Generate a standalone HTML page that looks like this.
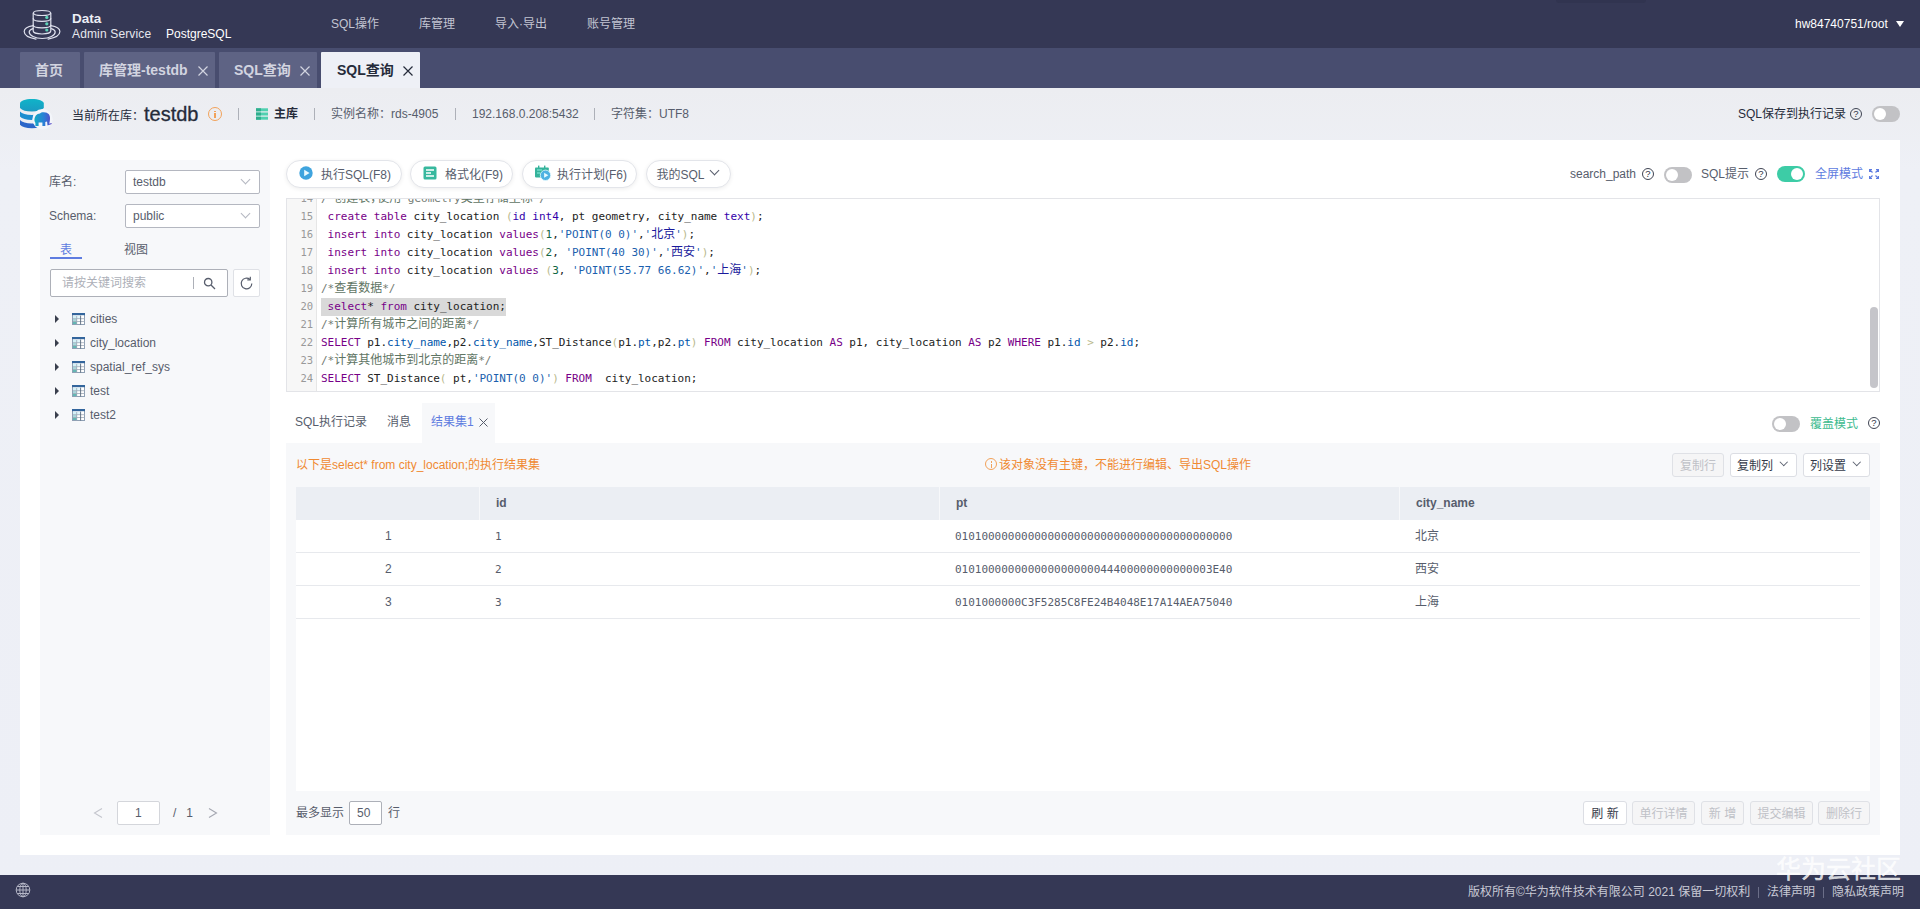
<!DOCTYPE html>
<html lang="zh-CN">
<head>
<meta charset="utf-8">
<title>Data Admin Service</title>
<style>
*{box-sizing:border-box;margin:0;padding:0}
html,body{width:1920px;height:909px;overflow:hidden}
body{font-family:"Liberation Sans","Noto Sans CJK SC",sans-serif;font-size:12px;color:#252b3a;background:linear-gradient(180deg,#ecedf1 90px,#eef0f6 170px,#edeff6 100%);position:relative}
.abs{position:absolute}
.t{position:absolute;white-space:nowrap;line-height:1}
/* top nav */
#nav{position:absolute;left:0;top:0;width:1920px;height:48px;background:#353855}
#nav .m{color:#c3c5d2;font-size:12px;top:18px}
/* tab bar */
#tabs{position:absolute;left:0;top:48px;width:1920px;height:40px;background:#484d6f}
.tab{position:absolute;top:4px;height:36px;border-radius:1px 1px 0 0;background:#5e6384;color:#d2d4e0;font-weight:bold;font-size:14px}
.tab.act{background:#eef0f6;color:#252b3a}
.tab .t{top:11px}
/* info bar */
#info{position:absolute;left:0;top:88px;width:1920px;height:52px}
#info .t{font-size:12px;color:#575d6c}
.vsep{position:absolute;width:1px;height:12px;background:#adb0b8;top:20px}
/* card */
#card{position:absolute;left:20px;top:140px;width:1880px;height:715px;background:#fff}
#left{position:absolute;left:40px;top:160px;width:230px;height:675px;background:#f7f8fa}
.sel{position:absolute;width:135px;height:24px;border:1px solid #b4b7c0;background:#fff;border-radius:2px}
.sel .t{left:7px;top:5px;color:#575d6c}

/* left panel */
.lbl{position:absolute;left:49px;color:#575d6c;font-size:12px;line-height:1;white-space:nowrap}
.chev{position:absolute;width:7px;height:7px;border-right:1px solid #b4b7c1;border-bottom:1px solid #b4b7c1;transform:rotate(45deg)}
.tree{position:absolute;left:50px;width:200px;height:24px}
.tree .ar{position:absolute;left:5px;top:8px;width:0;height:0;border-left:4.500px solid #3a3f4d;border-top:4px solid transparent;border-bottom:4px solid transparent}
.tree svg{position:absolute;left:22px;top:6px}
.tree .t{left:40px;top:6px;color:#575d6c;font-size:12px}
/* pills */
.pill{position:absolute;top:160px;height:28px;border:1px solid #e3e5ea;border-radius:14px;background:#fff;box-shadow:0 1px 4px rgba(0,0,0,.07)}
.pill .t{top:8px;color:#575d6c;font-size:12px}
/* toggles */
.tg{position:absolute;width:28px;height:16px;border-radius:8px;background:#c2c2c5}
.tg i{position:absolute;left:2px;top:2px;width:12px;height:12px;border-radius:6px;background:#fff}
.tg.on{background:#3dcca6}
.tg.on i{left:14px}
.q{position:absolute;width:12px;height:12px;border:1px solid #3f4453;border-radius:50%;font-size:9.500px;line-height:10px;text-align:center;color:#2f3443;font-weight:normal}
/* editor */
#ed{position:absolute;left:286px;top:198px;width:1594px;height:194px;border:1px solid #e3e4e8;background:#fff;overflow:hidden}
#gut{position:absolute;left:0;top:0;width:30px;height:100%;background:#f7f7f7;border-right:1px solid #e6e6e6}
.ln{position:absolute;left:0;width:1590px;height:18px;font-family:"DejaVu Sans Mono","Liberation Mono","Noto Sans CJK SC",monospace;font-size:11px;letter-spacing:-0.020px;line-height:18px;white-space:pre;color:#222}
.ln .g{position:absolute;left:0;top:0;width:26px;text-align:right;font-weight:normal;color:#999;font-size:10.500px;line-height:17px}
.ln .c{position:absolute;left:34px;text-decoration:none}
.k{color:#770088}.bi{color:#3300aa}.br{color:#b9b98c}.n{color:#116644}.st{color:#1b5fae}.cm{color:#727a72}.v2{color:#0055aa}
.cj{font-size:12px;color:#1a1a9c;letter-spacing:0;line-height:0}
.cm .cj{color:#5f7564}
/* results */
#res{position:absolute;left:286px;top:443px;width:1594px;height:392px;background:#f7f8fa}
.btn{position:absolute;height:24px;border:1px solid #dcdee4;border-radius:3px;background:#fff;color:#353a49;font-size:12px;line-height:24px;text-align:center;white-space:nowrap}
.btn.dis{background:#f5f5f6;color:#bfc1c7;border-color:#dfe1e6}
.th{position:absolute;top:487px;height:33px;background:#ebeef3}
.th .t{top:10px;left:16px;font-weight:bold;color:#575d6c;font-size:12px}
.row{position:absolute;left:296px;width:1564px;height:33px;border-bottom:1px solid #e7e9ed}
.row .t{top:10px;font-size:12px;color:#575d6c}
.row .mono{font-family:"DejaVu Sans Mono","Liberation Mono",monospace;font-size:11px;letter-spacing:-0.020px}
#footer .t{color:#c9cad6;font-size:12px;top:11px}
#footer{position:absolute;left:0;top:875px;width:1920px;height:34px;background:#353855}
</style>
</head>
<body>
<div id="nav">
  <svg class="abs" style="left:16px;top:4px" width="54" height="40" viewBox="16 4 54 40" fill="none" stroke="#dfe1ee" stroke-width="1.200" stroke-linecap="round">
    <ellipse cx="42" cy="13" rx="8.600" ry="2.500"/>
    <path d="M33.200 13V31c0 1.700 3.900 3 8.800 3s8.800-1.300 8.800-3V13"/>
    <path d="M33.200 18.600c0 1.600 3.900 2.800 8.800 2.800s8.800-1.200 8.800-2.800M33.200 25c0 1.600 3.900 2.800 8.800 2.800s8.800-1.200 8.800-2.800"/>
    <path d="M33.200 25.600C27 26.600 24.200 28.600 24.200 31.600c0 3.400 4.800 6.300 11.800 7.600M50.800 25.600C57 26.600 59.900 28.600 59.900 31.600c0 3.400-4.800 6.300-11.800 7.600"/>
    <path d="M33 28.600c-2.500.800-3.800 2-3.800 3.400 0 3.300 5.800 6.500 13 6.500s13-3.200 13-6.500c0-1.400-1.300-2.600-3.800-3.400"/>
    <circle cx="46.800" cy="17.400" r="1.600" fill="#5fd3b9" stroke="none"/><circle cx="46.800" cy="23.800" r="1.600" fill="#5fd3b9" stroke="none"/><circle cx="46.800" cy="30" r="1.600" fill="#5fd3b9" stroke="none"/>
  </svg>
  <div class="t" style="left:72px;top:12px;color:#eceef4;font-weight:bold;font-size:13.500px">Data</div>
  <div class="t" style="left:72px;top:28px;color:#e6e7ee;font-size:12px;letter-spacing:0.150px">Admin Service</div>
  <div class="t" style="left:166px;top:28px;color:#fff;font-size:12px">PostgreSQL</div>
  <div class="t m" style="left:331px">SQL操作</div>
  <div class="t m" style="left:419px">库管理</div>
  <div class="t m" style="left:495px">导入·导出</div>
  <div class="t m" style="left:587px">账号管理</div>
  <div class="t" style="left:1795px;top:18px;color:#fff;font-size:12px">hw84740751/root</div>
  <div class="abs" style="left:1896px;top:21px;width:0;height:0;border-top:6px solid #fff;border-left:4px solid transparent;border-right:4px solid transparent"></div>
  <div class="abs" style="left:1556px;top:0;width:90px;height:3px;background:#313450;border-radius:0 0 3px 3px"></div>
</div>
<div id="tabs">
  <div class="tab" style="left:20px;width:60px"><div class="t" style="left:15px">首页</div></div>
  <div class="tab" style="left:84px;width:131px"><div class="t" style="left:15px">库管理-testdb</div><svg class="abs" style="left:114px;top:14px" width="10" height="10" viewBox="0 0 10 10" stroke="#d2d4e0" stroke-width="1.2" fill="none"><path d="M0.500 0.500l9 9M9.500 0.500l-9 9"/></svg></div>
  <div class="tab" style="left:219px;width:98px"><div class="t" style="left:15px">SQL查询</div><svg class="abs" style="left:81px;top:14px" width="10" height="10" viewBox="0 0 10 10" stroke="#d2d4e0" stroke-width="1.2" fill="none"><path d="M0.500 0.500l9 9M9.500 0.500l-9 9"/></svg></div>
  <div class="tab act" style="left:321px;width:99px"><div class="t" style="left:16px">SQL查询</div><svg class="abs" style="left:82px;top:14px" width="10" height="10" viewBox="0 0 10 10" stroke="#252b3a" stroke-width="1.2" fill="none"><path d="M0.500 0.500l9 9M9.500 0.500l-9 9"/></svg></div>
</div>
<div id="info">
  <svg class="abs" style="left:14px;top:4px" width="48" height="44" viewBox="14 92 48 44">
    <defs>
      <linearGradient id="g1" x1="0" y1="0" x2="1" y2="0"><stop offset="0" stop-color="#12a9c2"/><stop offset="0.550" stop-color="#2a7fd6"/><stop offset="1" stop-color="#5a45c6"/></linearGradient>
      <linearGradient id="g2" x1="0" y1="0" x2="0" y2="1"><stop offset="0" stop-color="#10b4c8"/><stop offset="1" stop-color="#1b9ac2"/></linearGradient>
    </defs>
    <path d="M20 103.500C20 100.900 25.300 99 31.900 99S43.800 100.900 43.800 103.500V108C41.800 110.400 37.800 111.600 31.900 111.600S22 110.400 20 108Z" fill="url(#g2)"/>
    <path d="M20 111.400C22 113.700 26 114.900 31.900 114.900S41.800 113.700 43.800 111.400V116.600C41.800 118.900 37.800 120.100 31.900 120.100S22 118.900 20 116.600Z" fill="#1d8ed0"/>
    <path d="M20 120C22 122.300 26 123.500 31.900 123.500S41.800 122.300 43.800 120V124.800C41.800 127.100 37.800 128.300 31.900 128.300S22 127.100 20 124.800Z" fill="#2b66c9"/>
    <circle cx="42.500" cy="119.300" r="10.200" fill="#f3f5fa"/>
    <path d="M34.500 121C34 116.500 36.800 113.800 40 113.600C41 112.200 43.500 111.900 45 112.600C48 112.600 50 115 50 118C50 120.500 49.600 122.300 49.200 123.800L51.500 123.100L51.700 123.900L47.600 125.600C47.200 124.200 47.300 122.600 47 121.600L45.300 122V125.900H42.400V122.600H38.600V125.900H35.400V123Z" fill="url(#g1)"/>
  </svg>
  <div class="t" style="left:72px;top:22px;color:#252b3a">当前所在库：</div>
  <div class="t" style="left:144px;top:16px;font-size:20px;color:#252b3a;-webkit-text-stroke:0.300px #252b3a">testdb</div>
  <div class="abs" style="left:208px;top:19px;width:14px;height:14px;border:1.500px solid #f2a25a;border-radius:50%"></div>
  <div class="abs" style="left:214.300px;top:25px;width:1.500px;height:5px;background:#f2a25a"></div>
  <div class="abs" style="left:214.300px;top:22.500px;width:1.500px;height:1.500px;background:#f2a25a"></div>
  <div class="vsep" style="left:238px"></div>
  <svg class="abs" style="left:256px;top:20px" width="12" height="12" viewBox="0 0 12 12"><rect x="0" y="0.300" width="12" height="3" fill="#4fd0b0"/><rect x="0" y="4.500" width="12" height="3" fill="#4fd0b0"/><rect x="0" y="8.700" width="12" height="3" fill="#4fd0b0"/><rect x="0" y="0.300" width="5" height="3" fill="#2fae8e"/><rect x="0" y="4.500" width="5" height="3" fill="#2fae8e"/><rect x="0" y="8.700" width="5" height="3" fill="#2fae8e"/></svg>
  <div class="t" style="left:274px;top:20px;color:#252b3a;font-weight:bold">主库</div>
  <div class="vsep" style="left:314px"></div>
  <div class="t" style="left:331px;top:20px">实例名称：rds-4905</div>
  <div class="vsep" style="left:455px"></div>
  <div class="t" style="left:472px;top:20px">192.168.0.208:5432</div>
  <div class="vsep" style="left:594px"></div>
  <div class="t" style="left:611px;top:20px">字符集：UTF8</div>
  <div class="t" style="left:1738px;top:20px;color:#252b3a">SQL保存到执行记录</div>
  <div class="q" style="left:1850px;top:20px">?</div>
  <div class="tg" style="left:1872px;top:18px"><i></i></div>
</div>
<div id="card"></div>
<div id="left"></div>
<div id="leftc">
  <div class="lbl" style="top:176px">库名:</div>
  <div class="sel" style="left:125px;top:170px"><div class="t">testdb</div><div class="chev" style="left:116px;top:5px"></div></div>
  <div class="lbl" style="top:210px">Schema:</div>
  <div class="sel" style="left:125px;top:204px"><div class="t">public</div><div class="chev" style="left:116px;top:5px"></div></div>
  <div class="t" style="left:60px;top:243.500px;color:#5e7ce0;font-size:12px">表</div>
  <div class="abs" style="left:50px;top:257px;width:32px;height:2px;background:#5e7ce0"></div>
  <div class="t" style="left:124px;top:243.500px;color:#575d6c;font-size:12px">视图</div>
  <div class="abs" style="left:50px;top:269px;width:178px;height:28px;border:1px solid #adb0b8;border-radius:2px;background:#fff"></div>
  <div class="t" style="left:62px;top:277px;color:#adb0b8;font-size:12px">请按关键词搜索</div>
  <div class="abs" style="left:193px;top:277px;width:1px;height:12px;background:#adb0b8"></div>
  <svg class="abs" style="left:203px;top:277px" width="13" height="13" viewBox="0 0 13 13" fill="none" stroke="#575d6c" stroke-width="1.300"><circle cx="5.200" cy="5.200" r="3.700"/><path d="M8 8l4 4"/></svg>
  <div class="abs" style="left:233px;top:269px;width:27px;height:28px;border:1px solid #dfe1e6;border-radius:2px;background:#fff"></div>
  <svg class="abs" style="left:239px;top:276px" width="15" height="15" viewBox="0 0 15 15" fill="none" stroke="#575d6c" stroke-width="1.200"><path d="M12.800 7.500a5.300 5.300 0 1 1-1.800-4"/><path d="M11.300 0.800v3h-3" stroke-linejoin="miter"/></svg>
  <div class="tree" style="top:307px"><div class="ar"></div><svg width="13" height="12" viewBox="0 0 13 12"><rect x="0.500" y="0.500" width="12" height="11" fill="#fff" stroke="#8fa0b4"/><rect x="1" y="3" width="4" height="3" fill="#d3f1f6"/><rect x="1" y="6" width="4" height="2.500" fill="#a9d9dc"/><rect x="1" y="8.500" width="4" height="2.500" fill="#63b7b3"/><rect x="5" y="3" width="3.500" height="3" fill="#e2f6fb"/><rect x="0" y="0" width="13" height="2.200" fill="#33659c"/><path d="M1 5.700h11.500M1 8.500h11.500M4.700 3v8.500" stroke="#9eaab8" stroke-width="0.800" fill="none"/><path d="M8.600 2.600v9" stroke="#56677a" stroke-width="0.900" fill="none"/></svg><div class="t">cities</div></div>
  <div class="tree" style="top:331px"><div class="ar"></div><svg width="13" height="12" viewBox="0 0 13 12"><rect x="0.500" y="0.500" width="12" height="11" fill="#fff" stroke="#8fa0b4"/><rect x="1" y="3" width="4" height="3" fill="#d3f1f6"/><rect x="1" y="6" width="4" height="2.500" fill="#a9d9dc"/><rect x="1" y="8.500" width="4" height="2.500" fill="#63b7b3"/><rect x="5" y="3" width="3.500" height="3" fill="#e2f6fb"/><rect x="0" y="0" width="13" height="2.200" fill="#33659c"/><path d="M1 5.700h11.500M1 8.500h11.500M4.700 3v8.500" stroke="#9eaab8" stroke-width="0.800" fill="none"/><path d="M8.600 2.600v9" stroke="#56677a" stroke-width="0.900" fill="none"/></svg><div class="t">city_location</div></div>
  <div class="tree" style="top:355px"><div class="ar"></div><svg width="13" height="12" viewBox="0 0 13 12"><rect x="0.500" y="0.500" width="12" height="11" fill="#fff" stroke="#8fa0b4"/><rect x="1" y="3" width="4" height="3" fill="#d3f1f6"/><rect x="1" y="6" width="4" height="2.500" fill="#a9d9dc"/><rect x="1" y="8.500" width="4" height="2.500" fill="#63b7b3"/><rect x="5" y="3" width="3.500" height="3" fill="#e2f6fb"/><rect x="0" y="0" width="13" height="2.200" fill="#33659c"/><path d="M1 5.700h11.500M1 8.500h11.500M4.700 3v8.500" stroke="#9eaab8" stroke-width="0.800" fill="none"/><path d="M8.600 2.600v9" stroke="#56677a" stroke-width="0.900" fill="none"/></svg><div class="t">spatial_ref_sys</div></div>
  <div class="tree" style="top:379px"><div class="ar"></div><svg width="13" height="12" viewBox="0 0 13 12"><rect x="0.500" y="0.500" width="12" height="11" fill="#fff" stroke="#8fa0b4"/><rect x="1" y="3" width="4" height="3" fill="#d3f1f6"/><rect x="1" y="6" width="4" height="2.500" fill="#a9d9dc"/><rect x="1" y="8.500" width="4" height="2.500" fill="#63b7b3"/><rect x="5" y="3" width="3.500" height="3" fill="#e2f6fb"/><rect x="0" y="0" width="13" height="2.200" fill="#33659c"/><path d="M1 5.700h11.500M1 8.500h11.500M4.700 3v8.500" stroke="#9eaab8" stroke-width="0.800" fill="none"/><path d="M8.600 2.600v9" stroke="#56677a" stroke-width="0.900" fill="none"/></svg><div class="t">test</div></div>
  <div class="tree" style="top:403px"><div class="ar"></div><svg width="13" height="12" viewBox="0 0 13 12"><rect x="0.500" y="0.500" width="12" height="11" fill="#fff" stroke="#8fa0b4"/><rect x="1" y="3" width="4" height="3" fill="#d3f1f6"/><rect x="1" y="6" width="4" height="2.500" fill="#a9d9dc"/><rect x="1" y="8.500" width="4" height="2.500" fill="#63b7b3"/><rect x="5" y="3" width="3.500" height="3" fill="#e2f6fb"/><rect x="0" y="0" width="13" height="2.200" fill="#33659c"/><path d="M1 5.700h11.500M1 8.500h11.500M4.700 3v8.500" stroke="#9eaab8" stroke-width="0.800" fill="none"/><path d="M8.600 2.600v9" stroke="#56677a" stroke-width="0.900" fill="none"/></svg><div class="t">test2</div></div>
  <svg class="abs" style="left:92px;top:807px" width="12" height="12" viewBox="0 0 12 12" fill="none" stroke="#c4c6cd" stroke-width="1.100"><path d="M10 1.500L2.500 6L10 10.500"/></svg>
  <div class="abs" style="left:117px;top:801px;width:43px;height:24px;border:1px solid #d4d6db;border-radius:2px;background:#fff"></div>
  <div class="t" style="left:135px;top:807px;color:#575d6c">1</div>
  <div class="t" style="left:173px;top:807px;color:#575d6c">/&nbsp;&nbsp;&nbsp;1</div>
  <svg class="abs" style="left:207px;top:807px" width="12" height="12" viewBox="0 0 12 12" fill="none" stroke="#a4a7b1" stroke-width="1.100"><path d="M2 1.500L9.500 6L2 10.500"/></svg>
</div>
<div id="tb">
  <div class="pill" style="left:286px;width:116px"><svg class="abs" style="left:12px;top:5px" width="14" height="14" viewBox="0 0 14 14"><circle cx="7" cy="7" r="6.700" fill="#3fa4de"/><path d="M5.200 3.700v6.600l5.400-3.300z" fill="#eafaff"/></svg><div class="t" style="left:34px">执行SQL(F8)</div></div>
  <div class="pill" style="left:410px;width:103px"><svg class="abs" style="left:12px;top:5px" width="14" height="14" viewBox="0 0 14 14"><rect x="0.500" y="0.500" width="13" height="13" rx="1.500" fill="#37b89e"/><path d="M3 4h8M3 7h5M3 10h8" stroke="#fff" stroke-width="1.300"/></svg><div class="t" style="left:34px">格式化(F9)</div></div>
  <div class="pill" style="left:522px;width:115px"><svg class="abs" style="left:11px;top:4px" width="17" height="17" viewBox="0 0 17 17"><rect x="1" y="2.600" width="13.800" height="9.800" rx="0.800" fill="#35b39b"/><rect x="4" y="0.600" width="1.400" height="2.500" fill="#35b39b"/><rect x="10" y="0.600" width="1.400" height="2.500" fill="#35b39b"/><path d="M3 5h5M3 8h3" stroke="#8ff0e0" stroke-width="1"/><circle cx="11.500" cy="10.300" r="5.200" fill="#4fb2e2" stroke="#e8fbff" stroke-width="0.800"/><path d="M10.100 7.800v5l4.200-2.500z" fill="#e8fbff"/></svg><div class="t" style="left:34px">执行计划(F6)</div></div>
  <div class="pill" style="left:646px;width:85px"><div class="t" style="left:9.500px">我的SQL</div><div class="chev" style="left:64px;top:6px;border-color:#575d6c"></div></div>
  <div class="t" style="left:1570px;top:168px;color:#575d6c">search_path</div>
  <div class="q" style="left:1642px;top:168px">?</div>
  <div class="tg" style="left:1664px;top:167px"><i></i></div>
  <div class="t" style="left:1701px;top:168px;color:#575d6c">SQL提示</div>
  <div class="q" style="left:1755px;top:168px">?</div>
  <div class="tg on" style="left:1777px;top:166px"><i></i></div>
  <div class="t" style="left:1815px;top:168px;color:#5e7ce0">全屏模式</div>
  <svg class="abs" style="left:1869px;top:169px" width="10" height="10" viewBox="0 0 10 10" fill="none" stroke="#5e7ce0" stroke-width="1.200"><path d="M0.500 3V0.500H3M7 0.500h2.500V3M9.500 7v2.500H7M3 9.500H0.500V7M0.500 0.500l3 3M9.500 0.500l-3 3M9.500 9.500l-3-3M0.500 9.500l3-3"/></svg>
</div>
<div id="ed">
  <div id="gut"></div>
  <div class="ln" style="top:-9px"><span class="g">14</span><span class="c"><span class="cm">/*<span class="cj">创建表<span style="letter-spacing:-5px">，</span>使用</span> geometry<span class="cj">类型存储坐标</span>*/</span></span></div>
  <div class="ln" style="top:9px"><span class="g">15</span><span class="c"> <span class="k">create</span> <span class="k">table</span> city_location <span class="br">(</span><span class="bi">id</span> <span class="bi">int4</span>, pt geometry, city_name <span class="bi">text</span><span class="br">)</span>;</span></div>
  <div class="ln" style="top:27px"><span class="g">16</span><span class="c"> <span class="k">insert</span> <span class="k">into</span> city_location <span class="k">values</span><span class="br">(</span><span class="n">1</span>,<span class="st">'POINT(0 0)'</span>,<span class="st">'<span class="cj">北京</span>'</span><span class="br">)</span>;</span></div>
  <div class="ln" style="top:45px"><span class="g">17</span><span class="c"> <span class="k">insert</span> <span class="k">into</span> city_location <span class="k">values</span><span class="br">(</span><span class="n">2</span>, <span class="st">'POINT(40 30)'</span>,<span class="st">'<span class="cj">西安</span>'</span><span class="br">)</span>;</span></div>
  <div class="ln" style="top:63px"><span class="g">18</span><span class="c"> <span class="k">insert</span> <span class="k">into</span> city_location <span class="k">values</span> <span class="br">(</span><span class="n">3</span>, <span class="st">'POINT(55.77 66.62)'</span>,<span class="st">'<span class="cj">上海</span>'</span><span class="br">)</span>;</span></div>
  <div class="ln" style="top:81px"><span class="g">19</span><span class="c"><span class="cm">/*<span class="cj">查看数据</span>*/</span></span></div>
  <div class="ln" style="top:99px"><span class="abs" style="left:34px;top:0;width:185px;height:18px;background:#d9d9d9"></span><span class="g">20</span><span class="c"> <span class="k">select</span>* <span class="k">from</span> city_location;</span></div>
  <div class="ln" style="top:117px"><span class="g">21</span><span class="c"><span class="cm">/*<span class="cj">计算所有城市之间的距离</span>*/</span></span></div>
  <div class="ln" style="top:135px"><span class="g">22</span><span class="c"><span class="k">SELECT</span> p1.<span class="v2">city_name</span>,p2.<span class="v2">city_name</span>,ST_Distance<span class="br">(</span>p1.<span class="v2">pt</span>,p2.<span class="v2">pt</span><span class="br">)</span> <span class="k">FROM</span> city_location <span class="k">AS</span> p1, city_location <span class="k">AS</span> p2 <span class="k">WHERE</span> p1.<span class="v2">id</span> <span class="br">&gt;</span> p2.<span class="v2">id</span>;</span></div>
  <div class="ln" style="top:153px"><span class="g">23</span><span class="c"><span class="cm">/*<span class="cj">计算其他城市到北京的距离</span>*/</span></span></div>
  <div class="ln" style="top:171px"><span class="g">24</span><span class="c"><span class="k">SELECT</span> ST_Distance<span class="br">(</span> pt,<span class="st">'POINT(0 0)'</span><span class="br">)</span> <span class="k">FROM</span>  city_location;</span></div>
  <div class="abs" style="left:1583px;top:108px;width:8px;height:81px;border-radius:4px;background:#c5c5ca"></div>
</div>
<div id="rt">
  <div class="t" style="left:295px;top:416px;color:#575d6c">SQL执行记录</div>
  <div class="t" style="left:387px;top:416px;color:#575d6c">消息</div>
  <div class="abs" style="left:422px;top:403px;width:73px;height:40px;background:#f7f8fa"></div>
  <div class="t" style="left:431px;top:416px;color:#5e7ce0">结果集1</div>
  <svg class="abs" style="left:479px;top:418px" width="9" height="9" viewBox="0 0 9 9" stroke="#575d6c" stroke-width="1" fill="none"><path d="M0.500 0.500l8 8M8.500 0.500l-8 8"/></svg>
  <div class="tg" style="left:1772px;top:416px"><i></i></div>
  <div class="t" style="left:1810px;top:417.500px;color:#3dbb8f">覆盖模式</div>
  <div class="q" style="left:1868px;top:417px">?</div>
</div>
<div id="res"></div>
<div id="rc">
  <div class="t" style="left:296px;top:459px;color:#f08a32">以下是select* from city_location;的执行结果集</div>
  <div class="abs" style="left:985px;top:458px;width:12px;height:12px;border:1px solid #f2a25a;border-radius:50%"></div>
  <div class="abs" style="left:990.500px;top:463.500px;width:1px;height:4px;background:#f2a25a"></div>
  <div class="abs" style="left:990.500px;top:461px;width:1px;height:1.500px;background:#f2a25a"></div>
  <div class="t" style="left:999px;top:459px;color:#f08a32">该对象没有主键，不能进行编辑、导出SQL操作</div>
  <div class="btn dis" style="left:1672px;top:453px;width:52px">复制行</div>
  <div class="btn" style="left:1730px;top:453px;width:67px;text-align:left;padding-left:6px">复制列<div class="chev" style="left:49.500px;top:5px;width:5.500px;height:5.500px;border-color:#575d6c"></div></div>
  <div class="btn" style="left:1803px;top:453px;width:67px;text-align:left;padding-left:6px">列设置<div class="chev" style="left:49.500px;top:5px;width:5.500px;height:5.500px;border-color:#575d6c"></div></div>
  <div class="abs" style="left:296px;top:520px;width:1574px;height:271px;background:#fff"></div>
  <div class="th" style="left:296px;width:183px"></div>
  <div class="th" style="left:480px;width:459px"><div class="t">id</div></div>
  <div class="th" style="left:940px;width:459px"><div class="t">pt</div></div>
  <div class="th" style="left:1400px;width:470px"><div class="t">city_name</div></div>
  <div class="row" style="top:520px"><div class="t" style="left:89px">1</div><div class="t mono" style="left:199px;top:11px">1</div><div class="t mono" style="left:659px;top:11px">010100000000000000000000000000000000000000</div><div class="t" style="left:1119px">北京</div></div>
  <div class="row" style="top:553px"><div class="t" style="left:89px">2</div><div class="t mono" style="left:199px;top:11px">2</div><div class="t mono" style="left:659px;top:11px">010100000000000000000044400000000000003E40</div><div class="t" style="left:1119px">西安</div></div>
  <div class="row" style="top:586px"><div class="t" style="left:89px">3</div><div class="t mono" style="left:199px;top:11px">3</div><div class="t mono" style="left:659px;top:11px">0101000000C3F5285C8FE24B4048E17A14AEA75040</div><div class="t" style="left:1119px">上海</div></div>
  <div class="t" style="left:296px;top:807px;color:#575d6c">最多显示</div>
  <div class="abs" style="left:349px;top:801px;width:33px;height:24px;border:1px solid #adb0b8;border-radius:2px;background:#fff"></div>
  <div class="t" style="left:357px;top:807px;color:#575d6c">50</div>
  <div class="t" style="left:388px;top:807px;color:#575d6c">行</div>
  <div class="btn" style="left:1583px;top:801px;width:44px">刷 新</div>
  <div class="btn dis" style="left:1632px;top:801px;width:63px">单行详情</div>
  <div class="btn dis" style="left:1701px;top:801px;width:43px">新 增</div>
  <div class="btn dis" style="left:1750px;top:801px;width:63px">提交编辑</div>
  <div class="btn dis" style="left:1818px;top:801px;width:52px">删除行</div>
</div>
<div id="footer">
  <svg class="abs" style="left:15px;top:7px" width="16" height="16" viewBox="0 0 16 16" fill="none" stroke="#b4b6c6" stroke-width="1"><circle cx="8" cy="8" r="6.800"/><ellipse cx="8" cy="8" rx="3.200" ry="6.800"/><path d="M1.200 8h13.600M8 1.200v13.600M2.300 4.500h11.400M2.300 11.500h11.400"/></svg>
  <div class="t" style="left:1468px">版权所有©华为软件技术有限公司 2021 保留一切权利</div>
  <div class="abs" style="left:1758px;top:12px;width:1px;height:11px;background:#6b6e88"></div>
  <div class="t" style="left:1767px">法律声明</div>
  <div class="abs" style="left:1823px;top:12px;width:1px;height:11px;background:#6b6e88"></div>
  <div class="t" style="left:1832px">隐私政策声明</div>
</div>
<div class="t" style="left:1776px;top:857px;font-size:25px;color:rgba(255,255,255,.8);-webkit-text-stroke:0.400px rgba(255,255,255,.8)">华为云社区</div>

</body>
</html>
